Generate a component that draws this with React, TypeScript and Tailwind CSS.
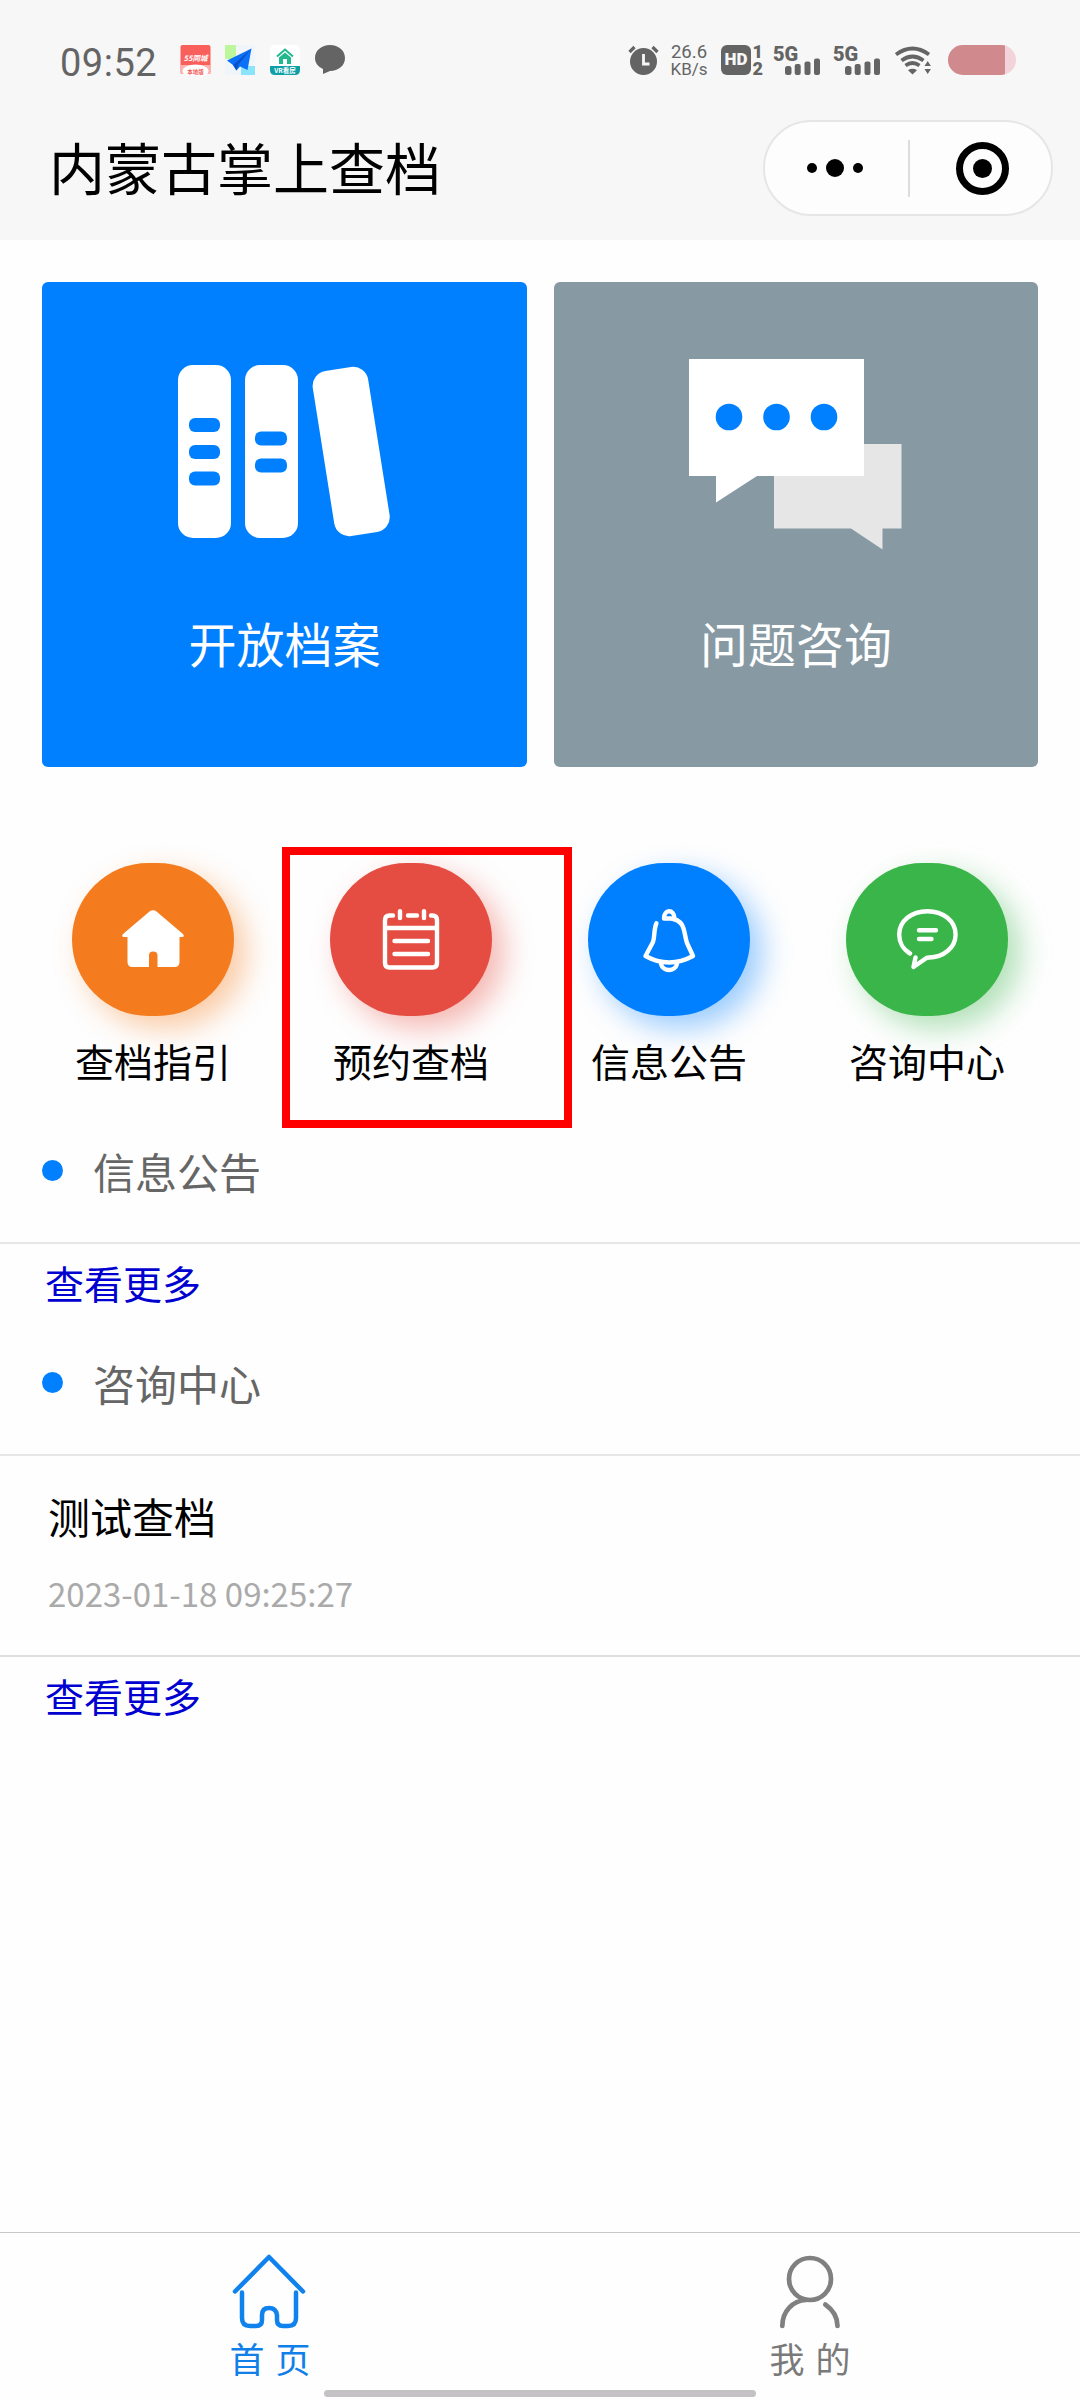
import type { ReactNode } from "react";

const SignalBars = () => (
  <div className="relative h-[32px] w-[50px]">
    <span className="absolute left-0 top-[-3px] font-['Roboto'] text-[20px] font-black leading-[24px]">5G</span>
    <svg className="absolute left-[12px] top-[13px]" width="36" height="17" viewBox="0 0 36 17" fill="#646464">
      <rect x="0" y="8" width="6.5" height="9" rx="2.5" />
      <rect x="9.7" y="6" width="6" height="11" rx="2" />
      <rect x="19.5" y="3.5" width="6" height="13.5" rx="2" />
      <rect x="29" y="0.5" width="6" height="16.5" rx="2" />
    </svg>
  </div>
);

const StatusBar = () => (
  <div className="flex h-[120px] items-start text-[#646464]">
    <div className="ml-[60px] mt-[43px] w-[120px] font-['Roboto'] text-[38px] leading-[40px] tracking-[0.5px]">09:52</div>
    <svg className="mt-[44px]" width="32" height="32" viewBox="0 0 32 32">
      <rect x="0.5" y="1" width="30" height="29" rx="2" fill="#f95f5b" />
      <rect x="0.5" y="21" width="30" height="9" fill="#fbb3b1" />
      <ellipse cx="15.5" cy="27" rx="13" ry="6.5" fill="#fff" />
      <text x="15.500" y="17" textAnchor="middle" fill="#fff" fontFamily="Noto Sans CJK SC" fontWeight="700" fontStyle="italic" fontSize="7.500">55同城</text>
      <text x="15.500" y="29.500" textAnchor="middle" fill="#f0605c" fontFamily="Noto Sans CJK SC" fontWeight="700" fontSize="5.500">本地版</text>
    </svg>
    <svg className="ml-[13px] mt-[44px]" width="32" height="32" viewBox="0 0 32 32">
      <rect x="0" y="1" width="30" height="30" fill="#f0f5f9" />
      <rect x="0" y="1" width="11" height="14" fill="#bdf79c" />
      <rect x="16" y="22" width="14" height="9" fill="#8be4fb" />
      <path d="M26.500 4.500 2 16.500 8 21l3.500 5.500 3.500-4 7.500 3.500z" fill="#0b72f8" />
      <path d="M26.500 4.500 8 21l3.500 5.500 2-6z" fill="#0a52cc" />
    </svg>
    <svg className="ml-[13px] mt-[44px]" width="32" height="32" viewBox="0 0 32 32">
      <rect x="0" y="1" width="30" height="30" rx="5" fill="#fff" />
      <path d="M0 22h30v4q0 5-5 5H5q-5 0-5-5z" fill="#0f9fa6" />
      <path d="m7 12.500 8-7 8 7" fill="none" stroke="#22b98f" strokeWidth="2" />
      <path d="m9 13.500 6-5 6 5v6.500h-4v-5h-4v5H9z" fill="#22b98f" />
      <text x="15" y="29" textAnchor="middle" fill="#fff" fontFamily="Noto Sans CJK SC" fontWeight="700" fontSize="6.500">VR看房</text>
    </svg>
    <svg className="ml-[13px] mt-[44px]" width="32" height="32" viewBox="0 0 32 32" fill="#646464">
      <path d="M15 1c8.500 0 15 5.500 15 13s-6.500 13-15 13L8 30v-5C3 22.500 0 19 0 14 0 6.500 6.500 1 15 1z" />
    </svg>
    <svg className="ml-[281px] mt-[44px]" width="32" height="32" viewBox="0 0 32 32">
      <circle cx="15.500" cy="17.500" r="13.500" fill="#646464" />
      <path d="m1.500 8 5-5M29.500 8l-5-5" stroke="#646464" strokeWidth="3.200" />
      <path d="M15.500 10v10h6" fill="none" stroke="#f7f7f7" strokeWidth="2.800" />
    </svg>
    <div className="ml-[9px] mt-[44px] flex w-[40px] flex-col items-center whitespace-nowrap font-['Roboto'] text-[18.5px] leading-[17px]">
      <span>26.6</span>
      <span className="text-[17px]">KB/s</span>
    </div>
    <div className="ml-[12px] mt-[45px] flex h-[30px] w-[30px] items-center justify-center rounded-[6px] bg-[#646464] font-['Roboto'] text-[17px] font-black text-[#f7f7f7]">HD</div>
    <div className="ml-[1px] mt-[43px] flex w-[11px] flex-col items-end font-['Roboto'] text-[18px] font-black leading-[17px]">
      <span>1</span>
      <span>2</span>
    </div>
    <div className="ml-[10px] mt-[45px] flex gap-[10px]">
      <SignalBars />
      <SignalBars />
    </div>
    <svg className="ml-[12px] mt-[45px]" width="40" height="30" viewBox="0 0 40 30" fill="none" stroke="#646464" strokeWidth="3.700">
      <path d="M1 9.500Q17.500 -2.500 34 9.500M6.500 15.500Q17.500 7.500 28.500 15.500M10.500 20.500Q17.500 15.500 24.500 20.500" />
      <path d="M13 25.200Q17.500 22.500 22 25.200L17.500 29.500Z" fill="#646464" stroke="none" />
      <path d="m29.500 21 3.200-5 3.200 5zM29.500 24h6.400l-3.200 5z" fill="#646464" stroke="none" />
    </svg>
    <div className="ml-[13px] mt-[45px] h-[30px] w-[68px] overflow-hidden rounded-full bg-[#f2d3da]">
      <div className="h-full w-[57px] bg-[#d08a8d]" />
    </div>
  </div>
);

const TitleBar = () => (
  <div className="flex h-[120px] items-start justify-between pl-[49px] pr-[27px]">
    <h1 className="mt-[6px] text-[56px] leading-[80px] text-black">内蒙古掌上查档</h1>
    <div className="flex h-[96px] w-[290px] items-center rounded-full border-2 border-[#e6e6e6] bg-[#fdfdfd]">
      <div className="flex w-[143px] items-center justify-center gap-[9px] pr-[4px]">
        <i className="h-[10px] w-[10px] rounded-full bg-black" />
        <i className="h-[18px] w-[18px] rounded-full bg-black" />
        <i className="h-[10px] w-[10px] rounded-full bg-black" />
      </div>
      <div className="h-[57px] w-[2px] bg-[#dcdcdc]" />
      <div className="flex flex-1 justify-center pl-[3px]">
        <div className="flex h-[53px] w-[53px] items-center justify-center rounded-full border-[7px] border-black">
          <i className="h-[19px] w-[19px] rounded-full bg-black" />
        </div>
      </div>
    </div>
  </div>
);

const BooksIcon = () => (
  <svg className="mr-[2px]" width="212" height="174" viewBox="0 0 212 174" fill="#fff">
    <rect x="0" y="0" width="53" height="173" rx="15" />
    <rect x="67" y="0" width="53" height="173" rx="15" />
    <rect x="145.200" y="3" width="56" height="167" rx="15" transform="rotate(-9 173.200 86.500)" />
    <g fill="#0080ff">
      <rect x="11" y="53" width="31" height="14" rx="6" />
      <rect x="11" y="80" width="31" height="14" rx="6" />
      <rect x="11" y="106.500" width="31" height="14" rx="6" />
      <rect x="77" y="66.500" width="32" height="14" rx="6" />
      <rect x="77" y="93.500" width="32" height="14" rx="6" />
    </g>
  </svg>
);

const MessagesIcon = () => (
  <svg className="mr-[1px]" width="213" height="192" viewBox="0 0 213 192">
    <path d="M85 85h127.500v84.500H193.500v21L162 169.500H85z" fill="#e6e6e6" />
    <path d="M0 0h175v117H68L27 143.500V117H0z" fill="#fff" />
    <g fill="#0080ff">
      <circle cx="40" cy="58" r="13.300" />
      <circle cx="87.500" cy="58" r="13.300" />
      <circle cx="135" cy="58" r="13.300" />
    </g>
  </svg>
);

const HomeSolid = () => (
  <svg width="64" height="64" viewBox="0 0 64 64" fill="#fff">
    <path d="M28.500 5.500q3.500-2.500 7 0L62 28q2 3-1 3h-2.500V56q0 5-5 5H36.500V49.500q0-4-4.300-4T28 49.500V61H11.500q-5 0-5-5V31H3q-3 0-1-3z" />
  </svg>
);

const CalendarIcon = () => (
  <svg width="64" height="64" viewBox="0 0 64 64" fill="none" stroke="#fff" strokeWidth="4.400" strokeLinecap="round">
    <path d="M14 9.500h-3.500q-4.500 0-4.500 4.500v43q0 4.500 4.500 4.500h43q4.500 0 4.500-4.500V14q0-4.500-4.500-4.500H52M29 9.500h9M6 22h52M15.500 35h33.500M15.500 48h33.500" />
    <path d="M21 5.200v6.800M45 5.200v6.800" />
  </svg>
);

const BellIcon = () => (
  <svg className="overflow-visible" width="64" height="64" viewBox="0 0 64 64" fill="none" stroke="#fff" strokeWidth="4.400" strokeLinecap="round" strokeLinejoin="round">
    <path d="M19.400 17.300C16.500 24 18 31 16 36L8.500 50Q32 63 56 50L50 37C46.500 27 49 14.500 34 12.500H27C27 3 37 3 37.500 12" />
    <path d="M24 58C26 66 38 66 40 58" />
  </svg>
);

const ChatIcon = () => (
  <svg width="64" height="64" viewBox="0 0 64 64" fill="none" stroke="#fff" strokeWidth="4.400" strokeLinecap="round" strokeLinejoin="round">
    <path d="M15 47.500C8 43.500 4.200 36 4.200 28.500 4.200 15 16.500 5.200 32.400 5.200S60.600 15 60.600 28.500C60.600 42 48 51.500 34 51.500Q31.500 51.500 30 53L18.500 61 20.500 51.500" />
    <path d="M24 24.300h17M24 33h12.500" />
  </svg>
);

const ShortcutItem = ({ label, tone, children }: { label: string; tone: string; children: ReactNode }) => (
  <div className="flex flex-col items-center">
    <div className={`flex h-[153px] w-[162px] items-center justify-center rounded-full pb-[3px] ${tone}`}>{children}</div>
    <span className="mt-[16px] text-[39px] leading-[56px] text-black">{label}</span>
  </div>
);

const SectionHeader = ({ title }: { title: string }) => (
  <div className="flex h-[143px] items-start border-b-2 border-[#e6e6e6] pl-[42px]">
    <i className="mt-[59px] h-[21px] w-[21px] rounded-full bg-[#0080ff]" />
    <h2 className="ml-[30px] mt-[40px] text-[42px] leading-[60px] text-[#666]">{title}</h2>
  </div>
);

const MoreLink = () => (
  <a className="block h-[69px] pl-[45px] pt-[10px] text-[39px] leading-[56px] text-[#0000d0]">查看更多</a>
);

export default function App() {
  return (
    <div className="flex h-[2400px] w-[1080px] flex-col overflow-hidden bg-[#fefefe] font-['Noto_Sans_CJK_SC',sans-serif]">
      <header className="h-[240px] shrink-0 bg-[#f7f7f7]">
        <StatusBar />
        <TitleBar />
      </header>

      <section className="flex justify-between pl-[42px] pr-[42px] pt-[42px]">
        <div className="flex h-[485px] w-[485px] flex-col items-center rounded-[6px] bg-[#0080ff] pt-[83px]">
          <BooksIcon />
          <span className="mt-[68px] text-[48px] leading-[70px] text-white">开放档案</span>
        </div>
        <div className="flex h-[485px] w-[484px] flex-col items-center rounded-[6px] bg-[#879aa3] pt-[77px]">
          <MessagesIcon />
          <span className="mt-[56px] text-[48px] leading-[70px] text-white">问题咨询</span>
        </div>
      </section>

      <section className="relative mx-[24px] mt-[96px] grid h-[238px] grid-cols-4">
        <ShortcutItem label="查档指引" tone="bg-[#f47c1f] shadow-[12px_12px_30px_rgba(244,124,31,0.4)]">
          <HomeSolid />
        </ShortcutItem>
        <ShortcutItem label="预约查档" tone="bg-[#e54d42] shadow-[12px_12px_30px_rgba(229,77,66,0.4)]">
          <CalendarIcon />
        </ShortcutItem>
        <ShortcutItem label="信息公告" tone="bg-[#0080ff] shadow-[12px_12px_30px_rgba(0,128,255,0.4)]">
          <BellIcon />
        </ShortcutItem>
        <ShortcutItem label="咨询中心" tone="bg-[#39b54a] shadow-[12px_12px_30px_rgba(57,181,74,0.4)]">
          <ChatIcon />
        </ShortcutItem>
        <div className="absolute left-[258px] top-[-16px] h-[281px] w-[290px] border-[8px] border-[#ff0000]" />
      </section>

      <SectionHeader title="信息公告" />
      <MoreLink />
      <SectionHeader title="咨询中心" />
      <article className="h-[201px] border-b-2 border-[#dedede] pl-[48px] pt-[30px]">
        <h3 className="text-[42px] leading-[60px] text-black">测试查档</h3>
        <p className="mt-[23px] text-[33px] leading-[48px] text-[#aaa]">2023-01-18 09:25:27</p>
      </article>
      <MoreLink />

      <nav className="relative mt-auto grid h-[168px] shrink-0 grid-cols-2 border-t border-[#c8c8c8]">
        <div className="flex flex-col items-center pt-[21px] text-[#1080e8]">
          <svg className="mr-[2px]" width="74" height="76" viewBox="0 0 74 76" fill="none" stroke="#0f82ee" strokeWidth="4.500" strokeLinecap="round" strokeLinejoin="round">
            <path d="M3 37.500 37 3l34 34.500" />
            <path d="M10 38.500V64q0 8 8 8h6q6 0 6-6v-5q0-7 7-7t8 7v5q0 6 6 6h5q8 0 8-8V38.500" />
          </svg>
          <span className="text-[35px] leading-[56px] [word-spacing:3px]">首 页</span>
        </div>
        <div className="flex flex-col items-center pt-[21px] text-[#7a7a7a]">
          <svg width="74" height="76" viewBox="0 0 74 76" fill="none" stroke="#808080" strokeWidth="4.700" strokeLinecap="round">
            <circle cx="37" cy="25" r="21" />
            <path d="M9.300 72C9.300 57 20 46.500 33 46M52.300 50.500Q64.500 59 64.500 72" />
          </svg>
          <span className="text-[35px] leading-[56px] [word-spacing:3px]">我 的</span>
        </div>
        <div className="absolute left-[324px] top-[157px] h-[7px] w-[432px] rounded-full bg-[#c4c2c4]" />
      </nav>
    </div>
  );
}
